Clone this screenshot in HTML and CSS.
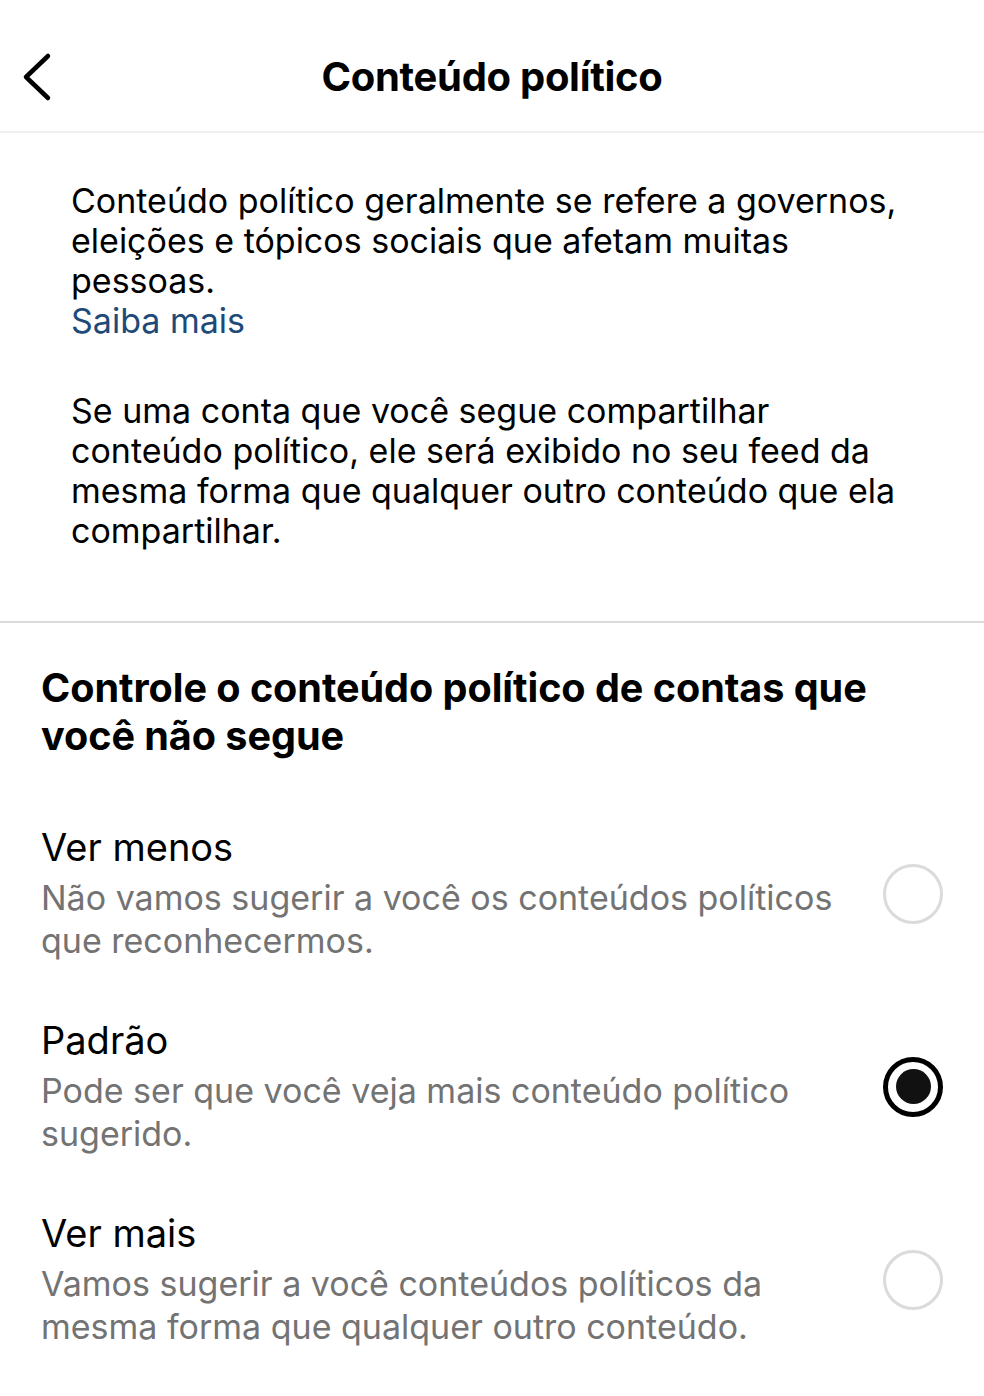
FILE: index.html
```html
<!DOCTYPE html>
<html lang="pt-BR">
<head>
<meta charset="utf-8">
<title>Conteúdo político</title>
<link rel="stylesheet" href="styles.css">
</head>
<body>
<header class="topbar">
  <button class="back" aria-label="Voltar">
    <svg width="34" height="50" viewBox="0 0 34 50"><path d="M28 4 L6 25 L28 46" fill="none" stroke="#000" stroke-width="4.5" stroke-linecap="round" stroke-linejoin="round"/></svg>
  </button>
  <h1 class="title">Conteúdo político</h1>
</header>
<main>
  <section class="intro">
    <p class="para">Conteúdo político geralmente se refere a governos, eleições e tópicos sociais que afetam muitas pessoas.<br><a class="link" href="#">Saiba mais</a></p>
    <p class="para">Se uma conta que você segue compartilhar conteúdo político, ele será exibido no seu feed da mesma forma que qualquer outro conteúdo que ela compartilhar.</p>
  </section>
  <section class="control">
    <h2 class="heading">Controle o conteúdo político de contas que você não segue</h2>
    <div class="options">
      <div class="option">
        <div class="opt-text">
          <div class="opt-title">Ver menos</div>
          <div class="opt-desc">Não vamos sugerir a você os conteúdos políticos que reconhecermos.</div>
        </div>
        <span class="radio"></span>
      </div>
      <div class="option">
        <div class="opt-text">
          <div class="opt-title">Padrão</div>
          <div class="opt-desc">Pode ser que você veja mais conteúdo político sugerido.</div>
        </div>
        <span class="radio checked"></span>
      </div>
      <div class="option">
        <div class="opt-text">
          <div class="opt-title">Ver mais</div>
          <div class="opt-desc">Vamos sugerir a você conteúdos políticos da mesma forma que qualquer outro conteúdo.</div>
        </div>
        <span class="radio"></span>
      </div>
    </div>
  </section>
</main>
</body>
</html>
```
FILE: styles.css
```css
* { box-sizing: border-box; }
html, body { margin: 0; padding: 0; background: #fff; }
body {
  font-family: Inter, "Noto Sans", "Liberation Sans", sans-serif;
  color: #000;
  width: 984px;
}
.topbar {
  height: 133px;
  padding-top: 22px;
  display: flex;
  align-items: center;
  justify-content: center;
  position: relative;
  border-bottom: 2px solid #f0f0f0;
}
.back {
  position: absolute;
  left: 20px;
  top: 52px;
  background: none;
  border: 0;
  padding: 0;
  width: 34px;
  height: 50px;
}
.back svg { display: block; }
.title {
  margin: 0;
  font-size: 40px;
  font-weight: 700;
  letter-spacing: -0.3px;
  line-height: 44px;
}
.intro {
  padding: 48px 70px 70px 71px;
  border-bottom: 2px solid #dbdbdb;
}
.para {
  margin: 0 0 50px;
  font-size: 34px;
  line-height: 40px;
}
.para:last-child { margin-bottom: 0; }
.link { color: #1e4a78; text-decoration: none; }
.control {
  padding: 41px 41px 0 41px;
}
.heading {
  margin: 0 0 65px;
  font-size: 39.6px;
  font-weight: 700;
  line-height: 48px;
  letter-spacing: -0.05px;
}
.options {
  display: flex;
  flex-direction: column;
  gap: 56px;
}
.option {
  display: flex;
  align-items: center;
  gap: 40px;
}
.opt-text { flex: 1; }
.opt-title {
  font-size: 38px;
  line-height: 44px;
  margin-bottom: 7px;
}
.opt-desc {
  font-size: 34px;
  line-height: 43px;
  color: #737373;
}
.radio {
  width: 60px;
  height: 60px;
  border-radius: 50%;
  border: 3px solid #dbdbdb;
  flex: none;
  position: relative;
}
.radio.checked {
  border: 5px solid #000;
}
.radio.checked::after {
  content: "";
  position: absolute;
  left: 50%;
  top: 50%;
  width: 35px;
  height: 35px;
  margin: -17.5px 0 0 -17.5px;
  border-radius: 50%;
  background: #111;
}
```
